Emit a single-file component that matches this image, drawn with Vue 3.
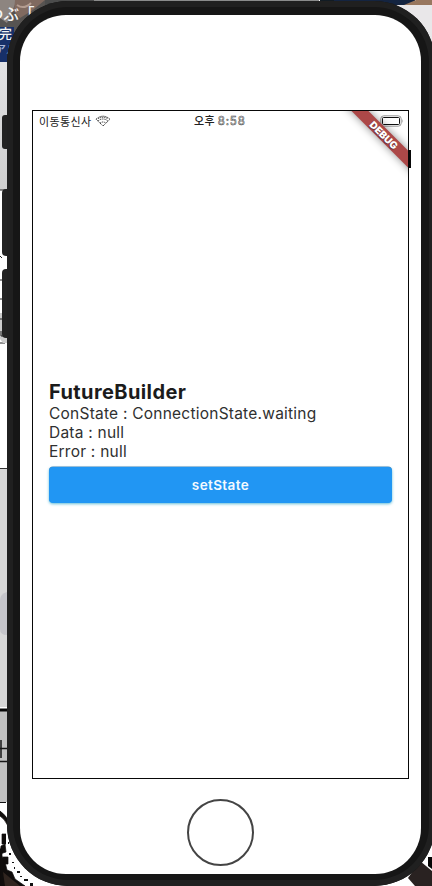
<script setup>
import { ref } from 'vue'
const connection = ref('ConnectionState.waiting')
const data = ref(null)
const error = ref(null)
const refresh = () => {
  connection.value = 'ConnectionState.waiting'
  data.value = null
}
</script>

<template>
  <div class="stage">
    <svg class="desktop" viewBox="0 0 432 886" aria-hidden="true">
      <defs>
        <linearGradient id="paper" x1="0" y1="0" x2="0" y2="1">
          <stop offset="0" stop-color="#e2e2e4" />
          <stop offset="1" stop-color="#cfcfcf" />
        </linearGradient>
      </defs>
      <rect width="432" height="886" fill="#fff" />
      <path d="M0 0h50v62H0z" fill="#575452" />
      <path d="M0 0h17L11 14l-4 9L0 18z" fill="#8d8580" />
      <path d="M15 0h30L33 10 20 18l-6-7z" fill="#806a60" />
      <path d="M17 5q7 5 14-2" fill="none" stroke="#b49c90" stroke-width="2" />
      <path d="M0 27h14v35H0z" fill="#173069" />
      <path d="M45 0h273v8H45z" fill="#4b4c4c" />
      <path d="M94 0h225v3H94z" fill="#8a8b8b" />
      <path d="M320 0h15v6h-15z" fill="#121c24" />
      <path d="M334 0h81v6h-81z" fill="#142440" />
      <path d="M404 5l12-5h16v5z" fill="#98775f" />
      <path d="M396 5h36v42z" fill="#e9e7e9" />
      <g fill="#f5f5f5" class="backdrop-text">
        <text x="-12" y="20" font-size="15.5">つぶ「</text>
        <text x="-1" y="38" font-size="13">完</text>
        <text x="-5" y="54" font-size="11" fill="#aab7d8">アル</text>
      </g>
      <path d="M0 62h8v128H0z" fill="url(#paper)" />
      <path d="M0 190h7M0 256l2 2M0 280h4M0 299h5M0 343h5" fill="none" stroke="#222" />
      <path d="M0 313h3v13h5v17H3l-3-4z" fill="#ccc" />
      <path d="M0 319h3M1 331v5h4" fill="none" stroke="#222" />
      <path d="M0 468h7v239H0z" fill="#d8d8d8" />
      <path d="M0 468.5h7" stroke="#333" />
      <path d="M7 592q-7 2-7 8v29q0 6 7 6z" fill="#c5c5ca" />
      <path d="M0 711h7v91H0z" fill="#c1c1c1" />
      <path d="M0 710h7" stroke="#090909" stroke-width="3" />
      <path d="M1 740v18M0 748.5h7M0 761.5h7" stroke="#171717" stroke-width="1.5" />
      <path d="M0 802.5h6" stroke="#111" />
      <path d="M0 811q6 4 9 11l-1 4q-4-8-8-10zM6 834H2v10h4M2 839h4M1 846l4-2 1 8-6 2zM3 857h5v7H4zM0 849h2v7l3 6 2 8 5 2 3 7 10 7H0z" fill="#100d0c" stroke="#100d0c" stroke-width=".7" />
      <path d="M8 842h1v2H8zM9 853h2v2H9zM12 862h2v1h-2zM17 871h3v2h-3zM24 879h4v2h-4zM14 867h1v2h-1zM20 876h2v1h-2zM30 883h3v3h-3z" fill="#111" />
      <path d="M3 872l17 14H5z" fill="#30251f" />
      <path d="M408 878l12-17 12 10v15h-17z" fill="#292221" />
      <path d="M428 857h4v12l-4-3z" fill="#050505" />
      <g fill="#222">
        <rect x="2" y="115" width="10" height="34" rx="3" />
        <rect x="2" y="189" width="10" height="67" rx="4" />
        <rect x="2" y="269" width="10" height="69" rx="4" />
      </g>
    </svg>

    <main class="phone">
      <div class="face">
        <section class="screen">
          <div class="view">
            <header class="status">
              <span class="carrier">이동통신사</span>
              <svg class="wifi" width="16" height="12" viewBox="0 0 16 12" fill="none" stroke="#333" stroke-width="1">
                <path d="M1 4.2q7-6 14 0L8 11z" stroke-dasharray="1.3 .7" />
                <path d="M3 6q5-4 10 0M5 8.2q3-2.4 6 0M3 3.8q5-3 10 0" stroke-dasharray="1.2 .8" />
              </svg>
              <span class="time">오후 <span class="digits">8:58</span></span>
              <svg class="battery" width="24" height="12" viewBox="0 0 24 12" fill="none">
                <rect x=".8" y=".8" width="20.4" height="10.4" rx="3" stroke="#999" />
                <rect x="2.5" y="2.5" width="17" height="7" rx="1" fill="#fff" stroke="#111" />
                <path d="M22.4 4v4q1.5-2 0-4z" fill="#999" />
              </svg>
            </header>

            <div class="content">
              <h1>FutureBuilder</h1>
              <p>ConState : {{ connection }}</p>
              <p>Data : {{ data ?? 'null' }}</p>
              <p>Error : {{ error ?? 'null' }}</p>
              <button type="button" @click="refresh">setState</button>
            </div>

            <div class="banner"><span>DEBUG</span></div>
          </div>
        </section>
        <div class="home"></div>
      </div>
    </main>
    <span class="notch"></span>
  </div>
</template>

<style>
body {
  background: #fff;
  overflow: hidden;
}
</style>

<style scoped>
.stage {
  position: relative;
  width: 432px;
  height: 886px;
  overflow: hidden;
  box-sizing: border-box;
  padding: 1px 0 0 7px;
}
.desktop {
  position: absolute;
  inset: 0;
  width: 432px;
  height: 886px;
}
.backdrop-text {
  font-family: "Noto Sans CJK JP", sans-serif;
  font-weight: 500;
}
.phone {
  position: relative;
  box-sizing: border-box;
  width: 428px;
  height: 885px;
  padding: 14px 14px 12px 13px;
  border-radius: 61px;
  background: #161616;
  box-shadow: inset 0 0 0 6px #202020;
}
.face {
  box-sizing: border-box;
  height: 859px;
  padding: 95px 12px 0;
  border-radius: 46px;
  background: #fff;
}
.screen {
  box-sizing: border-box;
  width: 377px;
  height: 669px;
  border: 1px solid #080808;
}
.view {
  position: relative;
  height: 667px;
  overflow: hidden;
}
.status {
  display: grid;
  grid-template-columns: 52px 16px 1fr 24px;
  column-gap: 5px;
  align-items: center;
  height: 19px;
  padding: 0 4px 0 6px;
  font: 11px/18px "Noto Sans CJK KR", sans-serif;
  color: #222;
  white-space: nowrap;
}
.carrier {
  letter-spacing: 0.35px;
}
.wifi {
  margin-left: -1px;
}
.time {
  padding-left: 77px;
  font-weight: 500;
  letter-spacing: 0.3px;
}
.digits {
  font: 11.5px/18px Inter, sans-serif;
  letter-spacing: 0.9px;
  color: #fff;
  -webkit-text-stroke: 0.5px #333;
}
.content {
  padding: 250px 16px 0;
  font-family: Inter, sans-serif;
  color: #303030;
}
h1 {
  margin: 0;
  font-size: 20px;
  line-height: 24px;
  font-weight: 700;
  letter-spacing: 0.4px;
  color: #1b1b1b;
}
p {
  margin: 0;
  font-size: 15.5px;
  line-height: 19px;
  letter-spacing: 0.23px;
}
button {
  display: block;
  width: 343px;
  height: 36px;
  margin-top: 6px;
  padding: 0;
  border: 0;
  border-radius: 4px;
  background: #2196f3;
  box-shadow: 0 1px 3px #62bdd7, 0 -0.5px 0 #4a7faf;
  color: #f4faff;
  font: 600 13.5px/36px Inter, sans-serif;
  letter-spacing: 0.4px;
}
.banner {
  position: absolute;
  left: 301px;
  top: 17.5px;
  width: 100px;
  height: 12px;
  transform: rotate(45deg);
  background: #ac4848;
  box-shadow: 0 0 8px rgba(0, 0, 0, 0.45);
  color: #fff;
  font: 900 10px/12px Inter, sans-serif;
  text-align: center;
  text-shadow: 0 1px 1px #632929;
}
.home {
  box-sizing: border-box;
  width: 67px;
  height: 67px;
  margin: 20px 0 0 155px;
  border: 2px solid #444;
  border-radius: 50%;
}
.notch {
  position: absolute;
  left: 409px;
  top: 150px;
  width: 2px;
  height: 18px;
  background: #080808;
}
</style>
